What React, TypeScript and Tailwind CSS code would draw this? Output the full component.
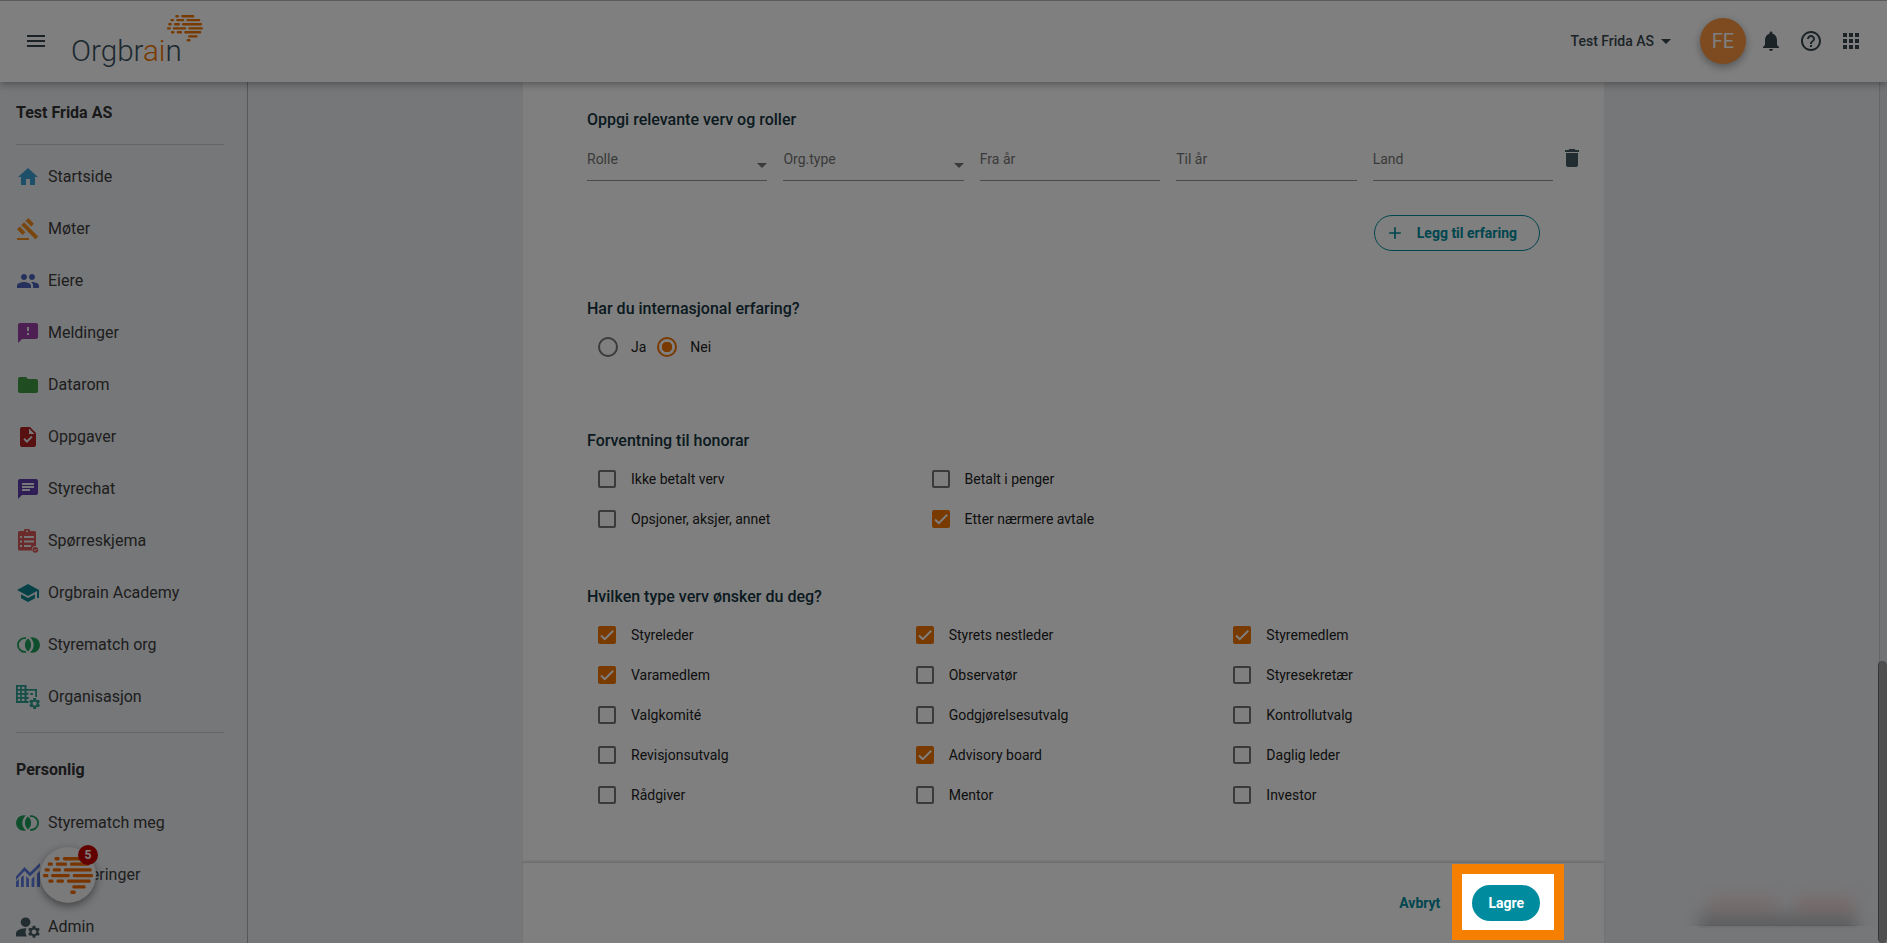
import React, { useId } from "react";
import type { ReactNode } from "react";
import {
  MdAdd,
  MdApps,
  MdArrowDropDown,
  MdChat,
  MdDelete,
  MdFeedback,
  MdFolder,
  MdGavel,
  MdGroup,
  MdHelpOutline,
  MdHome,
  MdManageAccounts,
  MdMenu,
  MdNotifications,
  MdSchool,
  MdTask,
} from "react-icons/md";

const GEAR =
  "M19.14 12.94c.04-.3.06-.61.06-.94 0-.32-.02-.64-.07-.94l2.03-1.58a.49.49 0 0 0 .12-.61l-1.92-3.32a.488.488 0 0 0-.59-.22l-2.39.96c-.5-.38-1.03-.7-1.62-.94l-.36-2.54a.484.484 0 0 0-.48-.41h-3.84c-.24 0-.43.17-.47.41l-.36 2.54c-.59.24-1.13.57-1.62.94l-2.39-.96c-.22-.08-.47 0-.59.22L2.74 8.87c-.12.21-.08.47.12.61l2.03 1.58c-.05.3-.09.63-.09.94s.02.64.07.94l-2.03 1.58a.49.49 0 0 0-.12.61l1.92 3.32c.12.22.37.29.59.22l2.39-.96c.5.38 1.03.7 1.62.94l.36 2.54c.05.24.24.41.48.41h3.84c.24 0 .44-.17.47-.41l.36-2.54c.59-.24 1.13-.56 1.62-.94l2.39.96c.22.08.47 0 .59-.22l1.92-3.32c.12-.22.07-.47-.12-.61l-2.01-1.58zM12 15.6c-1.98 0-3.6-1.62-3.6-3.6s1.62-3.6 3.6-3.6 3.6 1.62 3.6 3.6-1.62 3.6-3.6 3.6z";

/* [x, y, width] of every dash in the brain mark */
const BRAIN_DASHES: [number, number, number][] = [
  [34, 0, 15], [59, 0, 53],
  [14, 16, 15], [38, 16, 33], [80, 16, 57],
  [5, 33, 15], [29, 33, 24], [62, 33, 82],
  [0, 50, 16], [24, 50, 55], [88, 50, 60],
  [16, 66, 15], [40, 66, 22], [71, 66, 70],
  [87, 83, 39],
  [81, 99, 16],
];

function BrainDashes({ fill }: { fill: string }) {
  return (
    <g fill={fill}>
      {BRAIN_DASHES.map(([x, y, w]) => (
        <rect key={`${x}-${y}`} x={x} y={y} width={w} height={10} rx={4} />
      ))}
    </g>
  );
}

function Logo() {
  return (
    <svg viewBox="0 0 132 54" className="h-[54px] w-[132px]" role="img" aria-label="Orgbrain">
      <text x="-1" y="47" fontFamily="Roboto, sans-serif" fontSize="29.6" fontWeight="300" fill="#3a525e">
        Orgbr<tspan fill="#f27400">ai</tspan>n
      </text>
      <g transform="translate(95 1) scale(0.243)">
        <BrainDashes fill="#f27400" />
      </g>
    </svg>
  );
}

function SurveyIcon() {
  return (
    <svg viewBox="0 0 24 24" className="size-6">
      <path
        fill="#d65656"
        fillRule="evenodd"
        d="M3.500 2H8a3 3 0 0 1 6 0h4.500A1.500 1.500 0 0 1 20 3.500V17a3.500 3.500 0 0 0-4 4.500H3.500A1.500 1.500 0 0 1 2 20V3.500A1.500 1.500 0 0 1 3.500 2zM11 1.200a1 1 0 1 0 0 2 1 1 0 0 0 0-2zM4 7v2h2V7zm4 0v2h10V7zM4 11.500v2h2v-2zm4 0v2h10v-2zM4 16v2h2v-2zm4 0v2h7v-2z"
      />
      <circle cx="19.300" cy="20.800" r="2.900" fill="#d65656" />
      <path d="M17.900 20.900l1.100 1 1.700-2" fill="none" stroke="#eceef2" strokeWidth="0.900" />
    </svg>
  );
}

function MatchIcon({ flipped = false }: { flipped?: boolean }) {
  return (
    <svg viewBox="0 0 24 24" className="size-6">
      <g transform={flipped ? "translate(24 0) scale(-1 1)" : undefined}>
        <path d="M10 5.200A6.900 6.900 0 1 0 10 18.800" fill="none" stroke="#1e9c5a" strokeWidth="1.800" />
        <path d="M12 5.600a8.200 8.200 0 0 1 0 12.800 8.200 8.200 0 0 1 0-12.800z" fill="#1e9c5a" />
        <path d="M14.100 4.600A7.700 7.700 0 1 1 14.100 19.400a9.400 9.400 0 0 0 0-14.800z" fill="#1e9c5a" />
      </g>
    </svg>
  );
}

function OrganisationIcon() {
  return (
    <svg viewBox="0 0 24 24" className="size-6" fill="#2b9c8d">
      <path
        fillRule="evenodd"
        d="M0 0h10.500v4H21v8h-1.800V5.800h-8.700V18H0zM1.800 1.800v2.200h2.400V1.800zm4 0v2.200h2.700V1.800zM1.800 5.800V8h2.400V5.800zm4 0V8h2.700V5.800zM1.800 9.800V12h2.400V9.800zm4 0V12h2.700V9.800zM1.800 13.800V16h2.400v-2.200zm4 0V16h2.700v-2.200z"
      />
      <path d="M10 7.800h2.400v2H10zM14.300 8h2.600v2h-2.600zM10 12h2.600v2H10zM10 16h2.600v2H10z" />
      <g transform="translate(11.800 11.600) scale(0.570)">
        <path d={GEAR} />
      </g>
    </svg>
  );
}

function AnalyticsIcon() {
  return (
    <svg viewBox="0 0 24 24" className="size-6" fill="#5b7be0">
      <path d="M0 13.500L8.500 4l5.500 5.500L24 0v3.600L14 13.400 8.500 8 0 17z" />
      <path d="M0 18.500l2.800-2.800V24H0zM5 14.500l2.800-2.300V24H5zM10.200 13l2.800 3v8h-2.800zM15.600 16l2.700-2.700V24h-2.700zM21 10.800L24 8v16h-3z" />
    </svg>
  );
}

type NavItem = { label: string; icon: ReactNode };

const COMPANY_NAV: NavItem[] = [
  { label: "Startside", icon: <MdHome className="size-6 text-[#3d9fd3]" /> },
  { label: "Møter", icon: <MdGavel className="size-6 text-[#f28c1c]" /> },
  { label: "Eiere", icon: <MdGroup className="size-6 text-[#4a60b8]" /> },
  { label: "Meldinger", icon: <MdFeedback className="size-6 text-[#9c3fa5]" /> },
  { label: "Datarom", icon: <MdFolder className="size-6 text-[#3f9a43]" /> },
  { label: "Oppgaver", icon: <MdTask className="size-6 text-[#b02020]" /> },
  { label: "Styrechat", icon: <MdChat className="size-6 text-[#5e3cab]" /> },
  { label: "Spørreskjema", icon: <SurveyIcon /> },
  { label: "Orgbrain Academy", icon: <MdSchool className="size-6 text-[#0f8391]" /> },
  { label: "Styrematch org", icon: <MatchIcon /> },
  { label: "Organisasjon", icon: <OrganisationIcon /> },
];

const PERSONAL_NAV: NavItem[] = [
  { label: "Styrematch meg", icon: <MatchIcon flipped /> },
  { label: "Investeringer", icon: <AnalyticsIcon /> },
  { label: "Admin", icon: <MdManageAccounts viewBox="2 2 20 20" className="size-6 text-[#455a64]" /> },
];

function NavList({ items }: { items: NavItem[] }) {
  return (
    <ul>
      {items.map((item) => (
        <li key={item.label}>
          <a href="#" className="flex h-13 items-center gap-2 px-4 text-base text-[#3c3c3c]">
            {item.icon}
            {item.label}
          </a>
        </li>
      ))}
    </ul>
  );
}

function Header() {
  return (
    <header className="relative z-10 flex h-[82px] shrink-0 items-center border-t border-[#b5b5b5] bg-white px-6 pb-0.5 text-[#37474f] shadow-[0_2px_8px_rgba(0,0,0,0.35)]">
      <button aria-label="Meny">
        <MdMenu className="size-6" />
      </button>
      <a href="#" className="ml-6">
        <Logo />
      </a>
      <div className="ml-auto flex items-center gap-4">
        <button className="mr-1.5 flex items-center text-sm font-medium">
          Test Frida AS
          <MdArrowDropDown className="size-6" />
        </button>
        <button className="flex size-[46px] items-center justify-center rounded-full bg-[#fb963f] text-xl text-white shadow-[0_3px_8px_rgba(0,0,0,0.35)]">
          FE
        </button>
        <button aria-label="Varsler" className="-ml-[3px]">
          <MdNotifications className="size-6" />
        </button>
        <button aria-label="Hjelp">
          <MdHelpOutline className="size-6" />
        </button>
        <button aria-label="Apper">
          <MdApps className="size-6" />
        </button>
      </div>
    </header>
  );
}

function Field({ label, select = false }: { label: string; select?: boolean }) {
  const id = useId();
  return (
    <div className="relative h-[42px] min-w-0 flex-1 border-b border-[#949494]">
      <label htmlFor={id} className="pointer-events-none absolute top-2.5 left-0 text-sm text-[#757575]">
        {label}
      </label>
      {select ? (
        <>
          <select id={id} className="size-full appearance-none bg-transparent outline-none">
            <option value="" />
          </select>
          <svg viewBox="0 0 10 5" className="pointer-events-none absolute right-0 bottom-3 h-[5px] w-2.5 fill-[#757575]">
            <path d="M0 0h10L5 5z" />
          </svg>
        </>
      ) : (
        <input id={id} type="text" className="size-full bg-transparent outline-none" />
      )}
    </div>
  );
}

function Checkbox({ label, checked = false }: { label: string; checked?: boolean }) {
  return (
    <label className="flex h-10 items-center gap-[15px] pl-[11px] text-sm text-[#212121]">
      <span className="relative size-[18px]">
        <input
          type="checkbox"
          defaultChecked={checked}
          className="peer block size-[18px] appearance-none rounded-xs border-2 border-[#757575] checked:border-[#f27400] checked:bg-[#f27400]"
        />
        <svg
          viewBox="0 0 24 24"
          className="pointer-events-none absolute inset-0 hidden size-[18px] fill-none stroke-white stroke-[2.5] peer-checked:block"
        >
          <path d="M4.100 12.700L9 17.600 20.300 6.300" />
        </svg>
      </span>
      {label}
    </label>
  );
}

function Radio({ label, checked = false }: { label: string; checked?: boolean }) {
  return (
    <label className="flex h-10 items-center gap-[13px] pl-[11px] text-sm text-[#212121]">
      <input
        type="radio"
        name="international"
        defaultChecked={checked}
        className="size-5 appearance-none rounded-full border-2 border-[#757575] checked:border-[#f27400] checked:bg-[radial-gradient(#f27400_5px,transparent_5.5px)]"
      />
      {label}
    </label>
  );
}

function Heading({ children }: { children: ReactNode }) {
  return <h3 className="text-base font-medium text-[#143440]">{children}</h3>;
}

const FEES = [
  { label: "Ikke betalt verv" },
  { label: "Betalt i penger" },
  { label: "Opsjoner, aksjer, annet" },
  { label: "Etter nærmere avtale", checked: true },
];

const POSITIONS = [
  { label: "Styreleder", checked: true },
  { label: "Styrets nestleder", checked: true },
  { label: "Styremedlem", checked: true },
  { label: "Varamedlem", checked: true },
  { label: "Observatør" },
  { label: "Styresekretær" },
  { label: "Valgkomité" },
  { label: "Godgjørelsesutvalg" },
  { label: "Kontrollutvalg" },
  { label: "Revisjonsutvalg" },
  { label: "Advisory board", checked: true },
  { label: "Daglig leder" },
  { label: "Rådgiver" },
  { label: "Mentor" },
  { label: "Investor" },
];

function ProfileForm() {
  return (
    <form className="flex w-full max-w-[1081px] flex-col bg-white" onSubmit={(e) => e.preventDefault()}>
      <div className="flex-1 px-16 pt-[26px]">
        <section>
          <Heading>Oppgi relevante verv og roller</Heading>
          <div className="mt-[7px] -mr-11 flex items-start">
            <div className="flex flex-1 gap-4">
              <Field label="Rolle" select />
              <Field label="Org.type" select />
              <Field label="Fra år" />
              <Field label="Til år" />
              <Field label="Land" />
            </div>
            <button aria-label="Slett" className="mt-[7px] ml-[7px]">
              <MdDelete className="size-6 text-[#455a64]" />
            </button>
          </div>
          <div className="mt-[34px] flex justify-end">
            <button className="flex h-9 items-center gap-3 rounded-full border border-[#008c9e] pr-[22px] pl-2.5 text-sm font-bold text-[#008c9e]">
              <MdAdd className="size-5" />
              Legg til erfaring
            </button>
          </div>
        </section>
        <section className="mt-[46px]">
          <Heading>Har du internasjonal erfaring?</Heading>
          <div className="mt-1.5 flex">
            <Radio label="Ja" />
            <Radio label="Nei" checked />
          </div>
        </section>
        <section className="mt-[62px]">
          <Heading>Forventning til honorar</Heading>
          <div className="mt-1.5 grid grid-cols-[35%_1fr]">
            {FEES.map((item) => (
              <Checkbox key={item.label} {...item} />
            ))}
          </div>
        </section>
        <section className="mt-[46px]">
          <Heading>Hvilken type verv ønsker du deg?</Heading>
          <div className="mt-1.5 grid grid-cols-3">
            {POSITIONS.map((item) => (
              <Checkbox key={item.label} {...item} />
            ))}
          </div>
        </section>
      </div>
      <footer className="flex h-[81px] items-center justify-end gap-4 border-t border-[#dedede] px-16 shadow-[0_-1px_2px_rgba(0,0,0,0.12)]">
        <button className="px-4 text-sm font-bold text-[#008c9e]">Avbryt</button>
        <div className="relative">
          <button className="h-9 rounded-full bg-[#008c9e] px-4 text-sm font-bold text-white">Lagre</button>
          <div className="pointer-events-none absolute -top-[21px] -right-6 -bottom-[19px] -left-5 z-50 border-10 border-[#f77f00] shadow-[0_0_0_4000px_rgba(0,0,0,0.5)]" />
        </div>
      </footer>
    </form>
  );
}

function ChatLauncher() {
  return (
    <button
      aria-label="Åpne hjelpesenter"
      className="absolute bottom-10 left-10 z-20 flex size-14 items-center justify-center rounded-full bg-[#f4f4f4] shadow-[0_3px_8px_rgba(0,0,0,0.45)]"
    >
      <svg viewBox="0 0 148 109" className="h-[37px] w-[50px]">
        <BrainDashes fill="#f26a00" />
      </svg>
      <span className="absolute -top-0.5 -right-0.5 flex size-5 items-center justify-center rounded-full bg-[#c40000] text-xs font-bold text-white">
        5
      </span>
    </button>
  );
}

function FadedToast() {
  return (
    <div className="absolute right-3.5 bottom-4 w-[190px]" aria-hidden="true">
      <div className="relative h-15 overflow-hidden">
        <div className="absolute inset-x-4 -bottom-5 h-8 bg-black/20 blur-[8px]" />
        <div className="absolute right-4 bottom-3.5 h-4 w-16 rounded-full bg-[#ff5a3c]/15 blur-[7px]" />
        <div className="absolute bottom-3.5 left-6 h-4 w-18 rounded-full bg-[#ff5a3c]/12 blur-[7px]" />
      </div>
      <div className="mx-4 h-px bg-black/15 blur-[1px]" />
    </div>
  );
}

export default function App() {
  return (
    <div className="relative flex h-screen flex-col overflow-hidden bg-[#eceef2] font-[Roboto,sans-serif]">
      <Header />
      <div className="flex min-h-0 flex-1">
        <aside className="w-62 shrink-0 overflow-hidden border-r border-[#a9b0b5] pt-[5px] text-[#333333]">
          <h2 className="flex h-13 items-center px-4 text-base font-bold">Test Frida AS</h2>
          <hr className="mt-[5px] mr-[23px] mb-1.5 ml-4 border-[#c6c8cb]" />
          <NavList items={COMPANY_NAV} />
          <hr className="mt-[9px] mr-[23px] mb-[11px] ml-4 border-[#c6c8cb]" />
          <h2 className="flex h-13 items-center px-4 text-base font-bold">Personlig</h2>
          <div className="pt-px">
            <NavList items={PERSONAL_NAV} />
          </div>
        </aside>
        <main className="flex min-w-0 flex-1 justify-center">
          <ProfileForm />
        </main>
        <div className="flex w-2 shrink-0 flex-col justify-end border-l border-[#c9ccd1] bg-[#e4e6ea]">
          <div className="-ml-0.5 h-[282px] rounded-md border-l border-[#5f6f7a] bg-[#9e9e9e]" />
        </div>
      </div>
      <FadedToast />
      <ChatLauncher />
    </div>
  );
}
